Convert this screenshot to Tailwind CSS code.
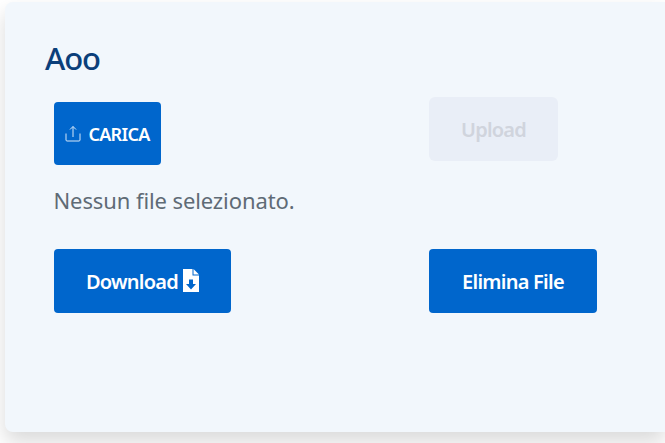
<!DOCTYPE html>
<html lang="en">
<head>
    <meta charset="UTF-8">
    <title>Aoo</title>
    <script src="https://cdn.jsdelivr.net/npm/@tailwindcss/browser@4"></script>
</head>
<body class="bg-white overflow-hidden h-[443px] font-['Noto_Sans',sans-serif]">
    <div class="ml-[5px] mt-[2px] h-[430px] bg-[#f2f7fc] rounded-l-[8px] shadow-[0_10px_20px_rgba(0,0,0,0.15)] pt-[37px] pl-[40px]">
        <h1 class="text-[31px] leading-[38px] font-medium text-[#0b3f7a] tracking-[-1.1px]">Aoo</h1>

        <div class="grid grid-cols-[375px_1fr] pl-[9px] mt-[20px]">
            <div>
                <div class="mt-[5px] w-[107px] h-[63px] pt-[1px] bg-[#0066cc] rounded-[4px] flex items-center justify-center gap-[7px] text-white text-[18px] font-semibold tracking-[-0.7px]">
                    <svg class="w-[16px] h-[17px] -mt-[2px]" viewBox="0 0 16 17" fill="none" stroke="#d6e7f8" stroke-width="1">
                        <path d="M1 8.500V15a1 1 0 0 0 1 1h12a1 1 0 0 0 1-1V8.500" />
                        <path d="M8 12V1.500M5 4.500L8 1.500 11 4.500" />
                    </svg>
                    <span>CARICA</span>
                </div>
            </div>
            <div>
                <div class="w-[129px] h-[64px] pt-[1px] bg-[#e9eef7] rounded-[6px] flex items-center justify-center text-[#d0d4dd] text-[20px] font-semibold tracking-[-0.8px]">Upload</div>
            </div>
        </div>

        <p class="pl-[9px] mt-[20px] text-[22px] leading-[30px] text-[#5f6b76] tracking-[-0.1px] -translate-x-[0.5px]">Nessun file selezionato.</p>

        <div class="grid grid-cols-[375px_1fr] pl-[9px] mt-[34px]">
            <div>
                <div class="w-[177px] h-[64px] pt-[1px] bg-[#0066cc] rounded-[4px] flex items-center justify-center gap-[5px] text-white text-[20px] font-semibold tracking-[-0.75px]">
                    <span>Download</span>
                    <svg class="w-[16px] h-[23px] -mt-[2px]" viewBox="0 0 16 23" fill="#fff">
                        <path d="M0 0H9.500V6.500H16V23H0Z" />
                        <path d="M10.500 0L16 5.500H10.500Z" />
                        <path d="M6 10.500H10V15H13L8 20.500 3 15H6Z" fill="#0066cc" />
                    </svg>
                </div>
            </div>
            <div>
                <div class="w-[168px] h-[64px] pt-[1px] bg-[#0066cc] rounded-[4px] flex items-center justify-center text-white text-[20px] font-semibold tracking-[-0.75px]">Elimina File</div>
            </div>
        </div>
    </div>
</body>
</html>
